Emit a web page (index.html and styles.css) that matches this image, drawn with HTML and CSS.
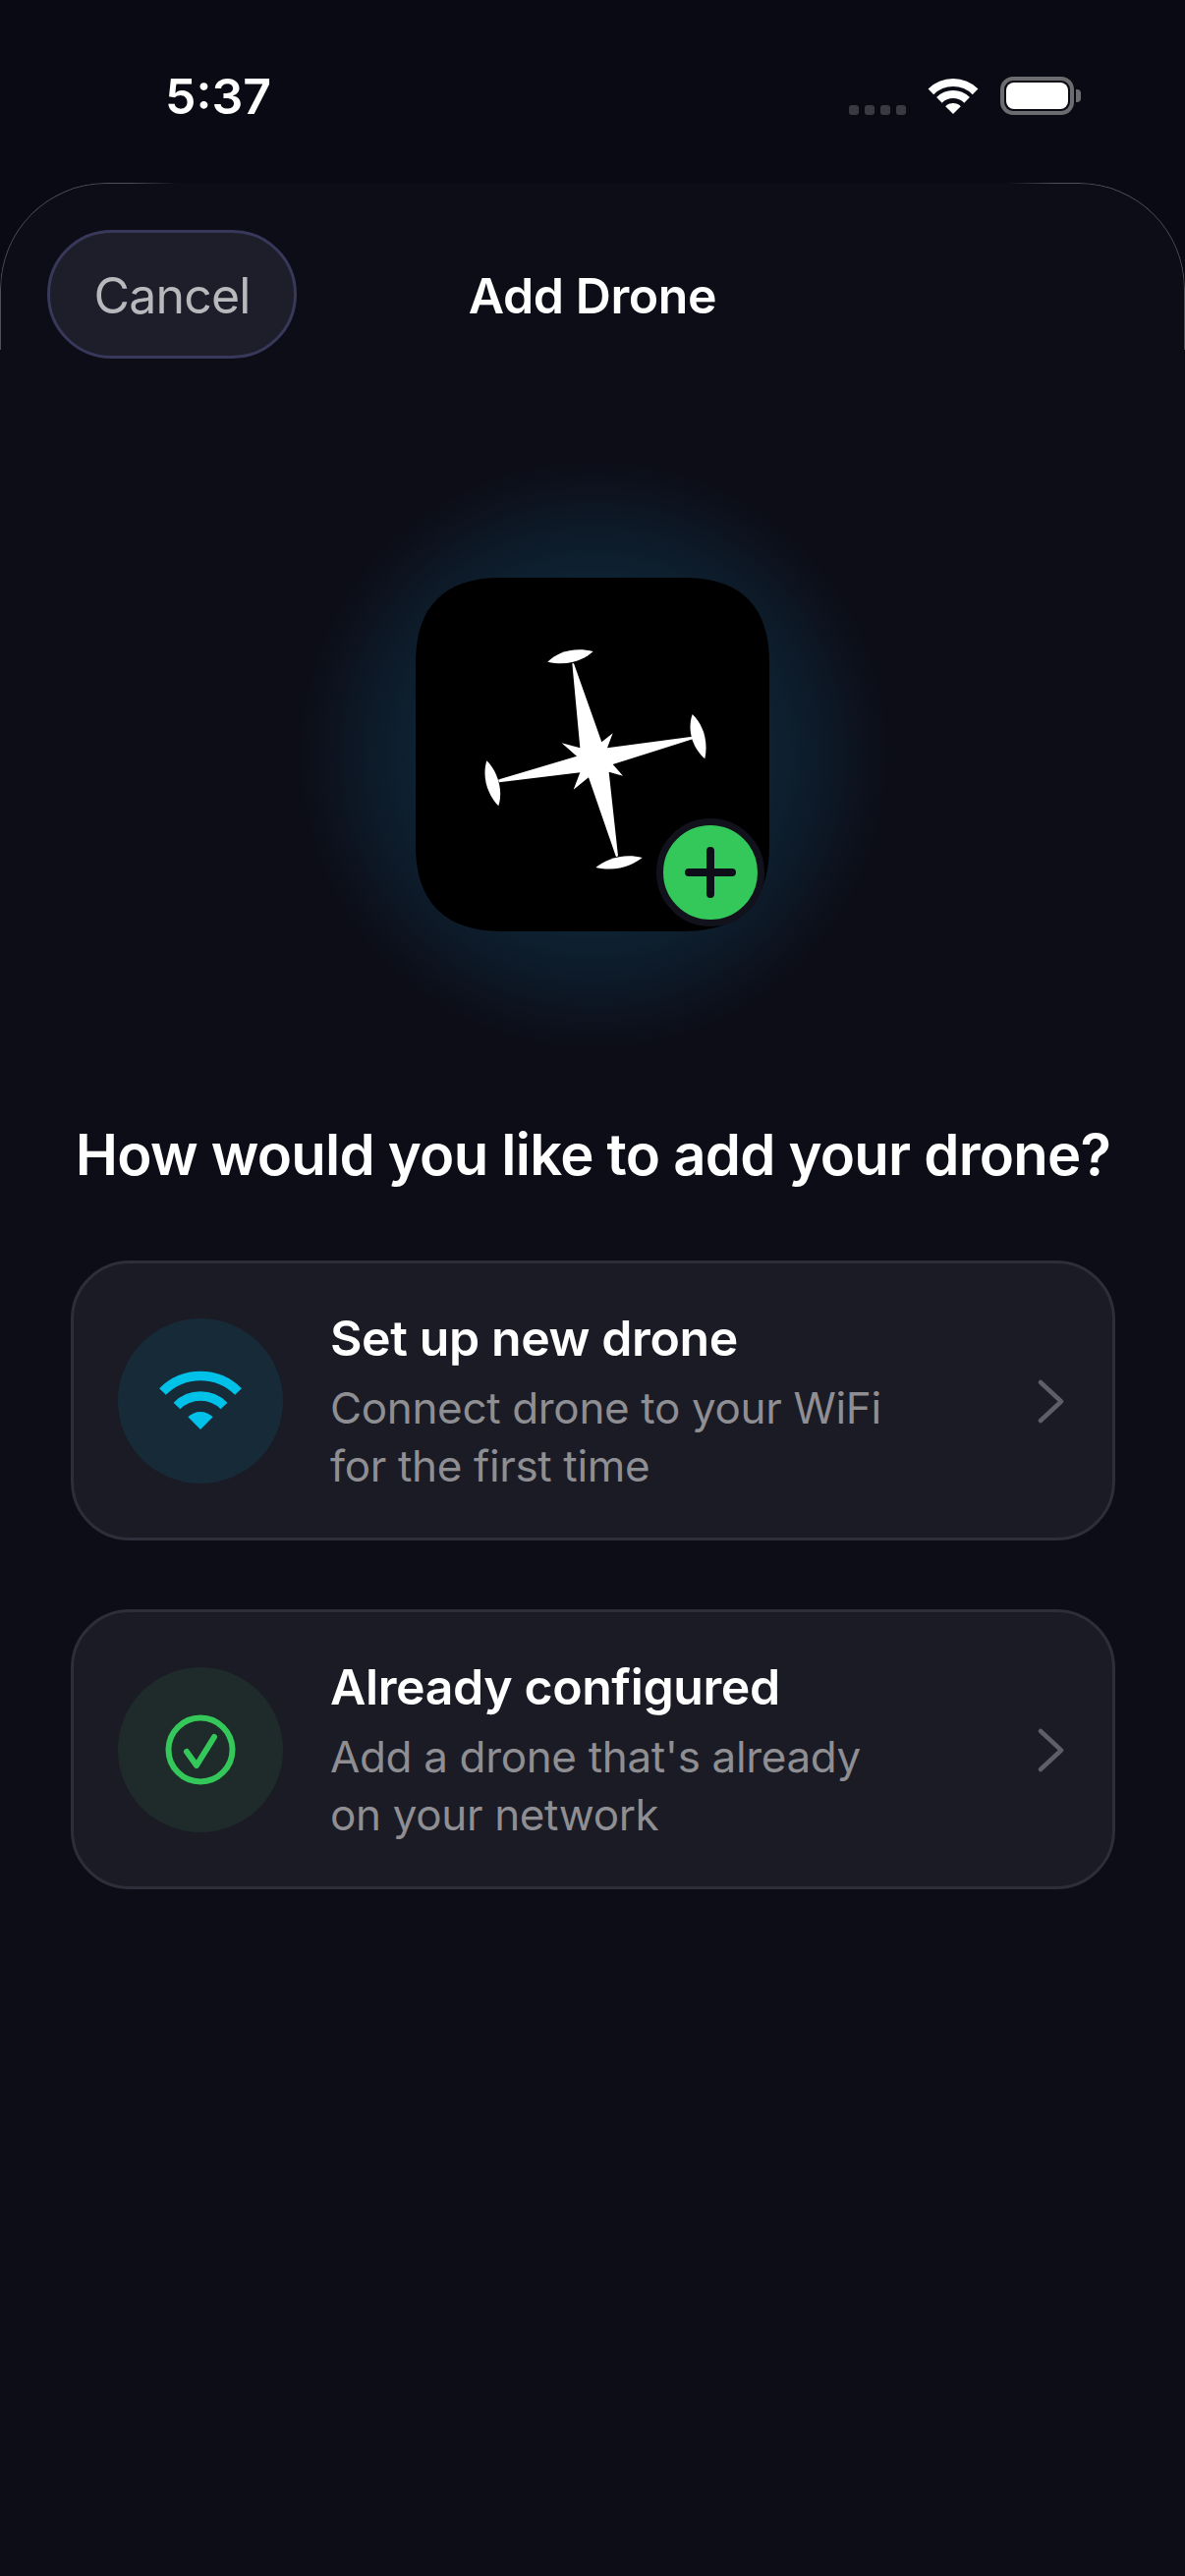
FILE: index.html
```html
<!DOCTYPE html>
<html>
	<head>
		<meta charset="UTF-8">
		<title>Add Drone</title>
		<link rel="stylesheet" href="styles.css">
	</head>
	<body>
		<div class="status_bar">
			<div class="time">5:37</div>
			<div class="status_icons">
				<div class="signal"><i></i><i></i><i></i><i></i></div>
				<svg class="status_wifi" viewBox="0 0 52 38">
					<path d="M3.4 14.4A32 32 0 0 1 48.6 14.4M11.9 22.9A20 20 0 0 1 40.1 22.9" fill="none" stroke="#fff" stroke-width="8"/>
					<path d="M26 37L18.2 29.2A11 11 0 0 1 33.8 29.2Z" fill="#fff"/>
				</svg>
				<div class="battery">
					<div class="battery_body"><div class="battery_fill"></div></div>
					<div class="battery_cap"></div>
				</div>
			</div>
		</div>
		<div class="sheet">
			<div class="sheet_edge"></div>
			<div class="header">
				<div class="cancel">Cancel</div>
				<div class="header_title">Add Drone</div>
			</div>
			<div class="hero">
				<div class="app_icon">
					<svg class="drone" viewBox="70 55 1080 1080">
						<path d="M330 55H890C1060 55 1150 140 1150 315V875C1150 1045 1060 1135 890 1135H330C160 1135 70 1045 70 875V315C70 140 160 55 330 55Z" fill="#000"/>
						<path d="M548 317L553 317L638 557L672 530L655 575L915 540L916 548L672 625L703 660L660 648L688 905L682 908L598 665L552 702L572 650L325 680L322 672L562 600L516 560L572 575Z" fill="#fff"/>
						<path d="M473 312C500 285 550 265 612 280C590 300 545 328 473 312Z" fill="#fff"/>
						<path d="M915 472C945 500 965 550 953 608C925 585 895 530 915 472Z" fill="#fff"/>
						<path d="M287 614C315 640 340 700 323 752C295 725 270 670 287 614Z" fill="#fff"/>
						<path d="M620 940C650 915 705 895 762 910C735 930 690 955 620 940Z" fill="#fff"/>
					</svg>
					<div class="plus_badge">
						<svg viewBox="0 0 96 96">
							<path d="M48 26V70M26 48H70" fill="none" stroke="#0d0e18" stroke-width="8" stroke-linecap="round"/>
						</svg>
					</div>
				</div>
			</div>
			<h1 class="question">How would you like to add your drone?</h1>
			<div class="options">
				<div class="option">
					<div class="option_icon option_icon-wifi">
						<svg class="wifi_icon" viewBox="0 0 84 62">
							<path d="M3.5 21.5A54.5 54.5 0 0 1 80.5 21.5M18 36A34 34 0 0 1 66 36" fill="none" stroke="#00c2e8" stroke-width="9.5"/>
							<path d="M42 60L29.3 47.3A18 18 0 0 1 54.7 47.3Z" fill="#00c2e8"/>
						</svg>
					</div>
					<div class="option_text">
						<div class="option_title">Set up new drone</div>
						<div class="option_sub">Connect drone to your WiFi<br>for the first time</div>
					</div>
					<svg class="chevron" viewBox="0 0 27 45"><path d="M3 3L24 22.5L3 42" fill="none" stroke="#5e5e68" stroke-width="4.5" stroke-linecap="round" stroke-linejoin="round"/></svg>
				</div>
				<div class="option">
					<div class="option_icon option_icon-check">
						<svg class="check_icon" viewBox="0 0 72 72">
							<circle cx="36" cy="36" r="32.5" fill="none" stroke="#34c759" stroke-width="6"/>
							<path d="M22 38L32 52L50 23" fill="none" stroke="#34c759" stroke-width="6" stroke-linecap="round" stroke-linejoin="round"/>
						</svg>
					</div>
					<div class="option_text">
						<div class="option_title">Already configured</div>
						<div class="option_sub">Add a drone that's already<br>on your network</div>
					</div>
					<svg class="chevron" viewBox="0 0 27 45"><path d="M3 3L24 22.5L3 42" fill="none" stroke="#5e5e68" stroke-width="4.5" stroke-linecap="round" stroke-linejoin="round"/></svg>
				</div>
			</div>
		</div>
	</body>
</html>
```
FILE: styles.css
```css
*{margin:0;padding:0;box-sizing:border-box;}
html{height:100%;}
body{
	height:100%;
	background:#090a13;
	font-family:Inter,"Liberation Sans",sans-serif;
	color:#fff;
	overflow:hidden;
}
.status_bar{
	height:186px;
	display:flex;
	justify-content:space-between;
	align-items:flex-start;
	padding:78px 106px 0 168px;
}
.time{
	font-size:50px;
	font-weight:600;
	line-height:40px;
}
.status_icons{
	display:flex;
	align-items:flex-end;
	gap:22px;
	height:39px;
}
.signal{
	display:flex;
	gap:6px;
}
.signal i{
	width:10px;
	height:10px;
	border-radius:3px;
	background:#3a3a42;
}
.status_wifi{
	width:52px;
	height:38px;
}
.battery{
	display:flex;
	align-items:center;
	gap:2px;
}
.battery_body{
	width:75px;
	height:39px;
	border:4px solid #6b6b70;
	border-radius:13px;
	padding:2px;
}
.battery_fill{
	height:100%;
	background:#fff;
	border-radius:8px;
}
.battery_cap{
	width:5px;
	height:13px;
	background:#6b6b70;
	border-radius:0 4px 4px 0;
}
.sheet{
	position:relative;
	height:2436px;
	background:#0c0d17;
	border-radius:108px 108px 0 0;
	padding:48px 71px 0 72px;
}
.sheet_edge{
	position:absolute;
	left:0;
	right:0;
	top:0;
	height:170px;
	border:1px solid rgba(255,255,255,.28);
	border-bottom:none;
	border-radius:108px 108px 0 0;
	-webkit-mask-image:linear-gradient(90deg,#000 11%,transparent 15%,transparent 85%,#000 89%);
	mask-image:linear-gradient(90deg,#000 11%,transparent 15%,transparent 85%,#000 89%);
}
.header{
	display:grid;
	grid-template-columns:1fr auto 1fr;
	align-items:center;
	margin:0 -23px 0 -24px;
}
.cancel{
	width:254px;
	height:131px;
	padding-top:2px;
	border:3px solid #38385a;
	border-radius:66px;
	background:#1e1e2a;
	color:#b8b8bd;
	font-size:50px;
	letter-spacing:-.8px;
	display:flex;
	align-items:center;
	justify-content:center;
}
.header_title{
	padding-top:2px;
	font-size:50px;
	font-weight:600;
	line-height:60px;
	letter-spacing:-.4px;
}
.hero{
	position:relative;
	display:flex;
	justify-content:center;
	margin-top:223px;
	padding-right:1px;
}
.hero:before{
	content:"";
	position:absolute;
	left:50%;
	top:50%;
	width:600px;
	height:600px;
	margin:-300px 0 0 -300px;
	background:radial-gradient(circle closest-side,#0e2434 0,#0e2434 55%,#0d1927 78%,rgba(12,13,23,0) 100%);
}
.app_icon{
	position:relative;
	width:360px;
	height:360px;
}
.drone{
	display:block;
	width:360px;
	height:360px;
}
.plus_badge{
	position:absolute;
	right:5px;
	bottom:5px;
	width:110px;
	height:110px;
	border-radius:50%;
	background:#34c759;
	border:7px solid #11121c;
}
.plus_badge svg{
	display:block;
	width:100%;
	height:100%;
}
.question{
	margin-top:192px;
	font-size:58px;
	font-weight:600;
	line-height:70px;
	letter-spacing:-.75px;
	text-align:center;
	white-space:nowrap;
}
.options{
	display:flex;
	flex-direction:column;
	gap:70px;
	margin-top:73px;
}
.option{
	display:flex;
	align-items:center;
	height:285px;
	padding:0 49px 0 45px;
	border:3px solid #2d2e3a;
	border-radius:60px;
	background:#1a1b24;
}
.option_icon{
	flex:none;
	width:168px;
	height:168px;
	border-radius:50%;
	display:flex;
	align-items:center;
	justify-content:center;
}
.option_icon-wifi{background:#172a38;}
.option_icon-check{background:#1f2b2b;}
.wifi_icon{
	width:84px;
	height:62px;
}
.check_icon{
	width:72px;
	height:72px;
}
.option_text{
	flex:1;
	margin-left:48px;
	padding-top:2px;
}
.option_title{
	font-size:50px;
	font-weight:600;
	line-height:60px;
	letter-spacing:-.4px;
}
.option_sub{
	margin-top:12px;
	font-size:44px;
	line-height:59px;
	letter-spacing:-.35px;
	color:#8e8e93;
}
.chevron{
	width:27px;
	height:45px;
	margin-top:2px;
}
```
